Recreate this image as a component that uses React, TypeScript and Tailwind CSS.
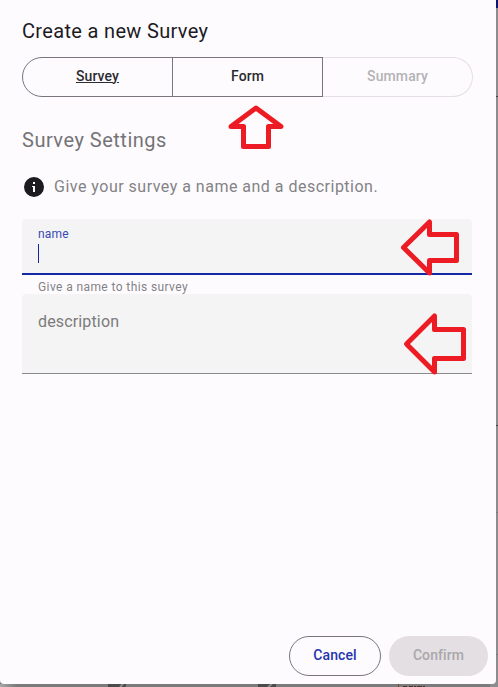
import React from 'react';

const tab = 'flex h-10 items-center justify-center border text-[14px] font-medium tracking-[0.1px]';

function Arrow({ points }: { points: string }) {
  return <polygon points={points} fill="none" stroke="#ed1c24" strokeWidth="5" strokeLinejoin="round" />;
}

export default function App() {
  return (
    <div className="relative h-[687px] w-[498px] overflow-hidden bg-[#7b7b7c] font-[Roboto,sans-serif]">
      <div className="absolute top-0 right-0 h-[687px] w-2 bg-[#8c8c8e]">
        <div className="h-2 bg-[#0b1670]" />
        <div className="mt-[88px] h-px bg-[#454548]" />
        <div className="mt-[328px] h-px bg-[#454548]" />
        <div className="mt-[86px] h-px bg-[#7a7a7c]" />
        <div className="mt-[141px] h-px bg-[#7a7a7c]" />
      </div>
      <div className="absolute bottom-0 left-0 h-[3px] w-4 bg-linear-to-r from-[#a5a8a6] to-[#7b7b7c]" />
      <div className="absolute bottom-0 left-[108px] h-[3px] w-[18px] bg-[#4b4b4c]" />
      <div className="absolute bottom-0 left-[258px] h-[3px] w-[18px] bg-[#4b4b4c]" />
      <svg className="absolute bottom-0 left-0" width="498" height="3">
        <path d="M120 3l3-3M268 3l4-3" stroke="#8a8a8a" strokeWidth="2" />
        <path d="M398.5 0v3" stroke="#6b4a22" />
        <path d="M403 2.5h4M409 2.5h4M414 2.5h2M417 2.5h5M423 2.5h2" stroke="#46312c" />
      </svg>

      <main className="relative flex h-[684px] w-[496px] flex-col rounded-b-[4px] bg-[#fefbff] pr-2 pl-[22px]">
        <h1 className="mt-[17px] text-[20px] leading-7 font-normal tracking-[0.33px] text-[#1c1b1f]">Create a new Survey</h1>
        <div className="mt-3 flex w-[451px]">
          <div className={`${tab} w-[151px] rounded-l-full border-[#79747e] pb-[2px] text-[#2c2b2f] underline`}>Survey</div>
          <div className={`${tab} -ml-px w-[151px] border-[#79747e] pb-[2px] text-[#2c2b2f]`}>Form</div>
          <div className={`${tab} w-[150px] rounded-r-full border-l-0 border-[#e4dfe4] pb-[2px] text-[#b4b2b5]`}>Summary</div>
        </div>
        <h2 className="mt-[29px] text-[20px] leading-7 font-normal tracking-[0.5px] text-[#747476]">Survey Settings</h2>
        <div className="mt-[21px] flex h-6 items-center">
          <svg width="24" height="24" viewBox="0 0 24 24" fill="#1c1b1f">
            <path fillRule="evenodd" d="M12 2a10 10 0 1 0 0 20 10 10 0 0 0 0-20zM13 17h-2v-5h-1v-1h3v6zM13 9h-2V7h2z" />
          </svg>
          <p className="ml-2 text-[16px] leading-6 tracking-[0.49px] text-[#838385]">Give your survey a name and a description.</p>
        </div>
        <div className="mt-5 h-14 w-[450px] rounded-t-[4px] border-b-2 border-[#1427a4] bg-[#f4f4f4] px-4 pt-[7px]">
          <div className="text-[12px] leading-4 tracking-[0.2px] text-[#3a49b4]">name</div>
          <div className="mt-[2px] h-[19px] w-px bg-[#1427a4]" />
        </div>
        <p className="h-[19px] pt-1 pl-4 text-[12px] leading-4 tracking-[0.4px] text-[#838385]">Give a name to this survey</p>
        <div className="h-20 w-[450px] rounded-t-[4px] border-b border-[#8a8a8c] bg-[#f4f4f4] px-4 pt-4 text-[16px] leading-6 tracking-[0.15px] text-[#7b7b7b]">description</div>
        <div className="mt-auto mb-2 flex justify-end gap-2 text-[14px] font-medium tracking-[0.1px]">
          <button className="h-10 w-[92px] rounded-full border border-[#79747e] pb-[2px] text-[#2435ac]">Cancel</button>
          <button className="h-10 w-[99px] rounded-full bg-[#e3dfe3] pb-[2px] text-[#aaa7aa]">Confirm</button>
        </div>
      </main>
      <svg className="pointer-events-none absolute top-0 left-0" width="498" height="687">
        <Arrow points="256,108 281,126.5 268.5,126.5 268.5,146.5 243.5,146.5 243.5,126.5 231,126.5" />
        <Arrow points="403.5,247.5 429.5,222 429.5,234.5 456.5,234.5 456.5,260.5 429.5,260.5 429.5,273" />
        <Arrow points="406.5,344 434.5,316 434.5,329.5 463.5,329.5 463.5,358.5 434.5,358.5 434.5,372" />
      </svg>
    </div>
  );
}
